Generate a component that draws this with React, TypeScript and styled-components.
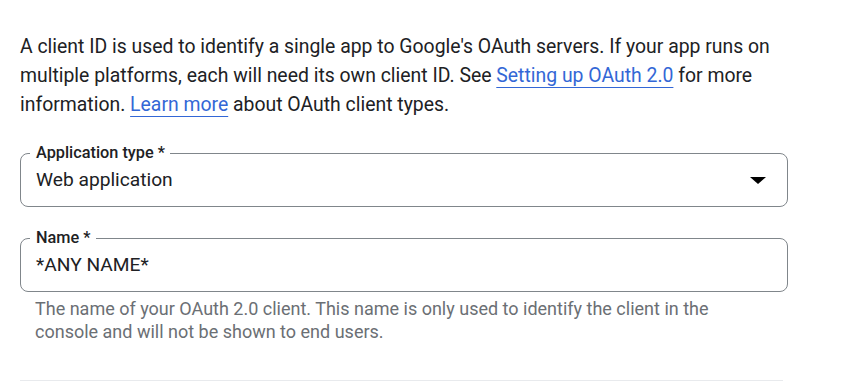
import React from 'react'
import styled, { createGlobalStyle } from 'styled-components';

const GlobalStyle = createGlobalStyle`
body {
  margin: 0;
  background: #fff;
  font-family: Roboto, "Liberation Sans", Arial, sans-serif;
  color: #202124;
}
`;

const Page = styled.div`
width: 847px;
height: 382px;
box-sizing: border-box;
padding: 32px 59px 0 20px;
overflow: hidden;
`;

const Intro = styled.p`
margin: 0 0 25px;
font-size: 19.4px;
line-height: 29px;
color: #202124;
white-space: nowrap;
`;

const Link = styled.a`
color: #3367d6;
text-decoration: underline;
text-decoration-thickness: 1px;
text-underline-offset: 5px;
cursor: pointer;
`;

const Field = styled.fieldset`
margin: 0;
padding: 6px 15px 14px;
border: 1px solid #80868b;
border-radius: 8px;
display: flex;
align-items: center;
justify-content: space-between;
`;

const Legend = styled.legend`
margin-left: -6px;
padding: 0 5px 0 6px;
font-size: 16.3px;
font-weight: 500;
line-height: 18px;
color: #202124;
`;

const Value = styled.span`
font-size: 19.2px;
line-height: 24px;
color: #202124;
`;

const Arrow = styled.svg`
width: 16px;
height: 7px;
margin-right: 6px;
`;

const Group = styled.div<{ $gap?: number }>`
margin-bottom: ${(props) => props.$gap ?? 0}px;
`;

const Hint = styled.p`
margin: 5px 0 0 15px;
font-size: 18px;
line-height: 23px;
color: #6b6f74;
white-space: nowrap;
`;

const Divider = styled.hr`
margin: 37px 5px 0 0;
border: none;
border-top: 1px solid #e8eaed;
`;

const App = () => {
  return (
    <Page>
      <GlobalStyle />
      <Intro>
        A client ID is used to identify a single app to Google's OAuth servers. If your app runs on<br />
        multiple platforms, each will need its own client ID. See <Link>Setting up OAuth 2.0</Link> for more<br />
        information. <Link>Learn more</Link> about OAuth client types.
      </Intro>
      <Group $gap={22}>
        <Field>
          <Legend>Application type *</Legend>
          <Value>Web application</Value>
          <Arrow viewBox="0 0 16 7">
            <polygon points="0,0 16,0 8,7" fill="#000" />
          </Arrow>
        </Field>
      </Group>
      <Group>
        <Field>
          <Legend>Name *</Legend>
          <Value>*ANY NAME*</Value>
        </Field>
        <Hint>
          The name of your OAuth 2.0 client. This name is only used to identify the client in the<br />
          console and will not be shown to end users.
        </Hint>
      </Group>
      <Divider />
    </Page>
  )
}

export default App
